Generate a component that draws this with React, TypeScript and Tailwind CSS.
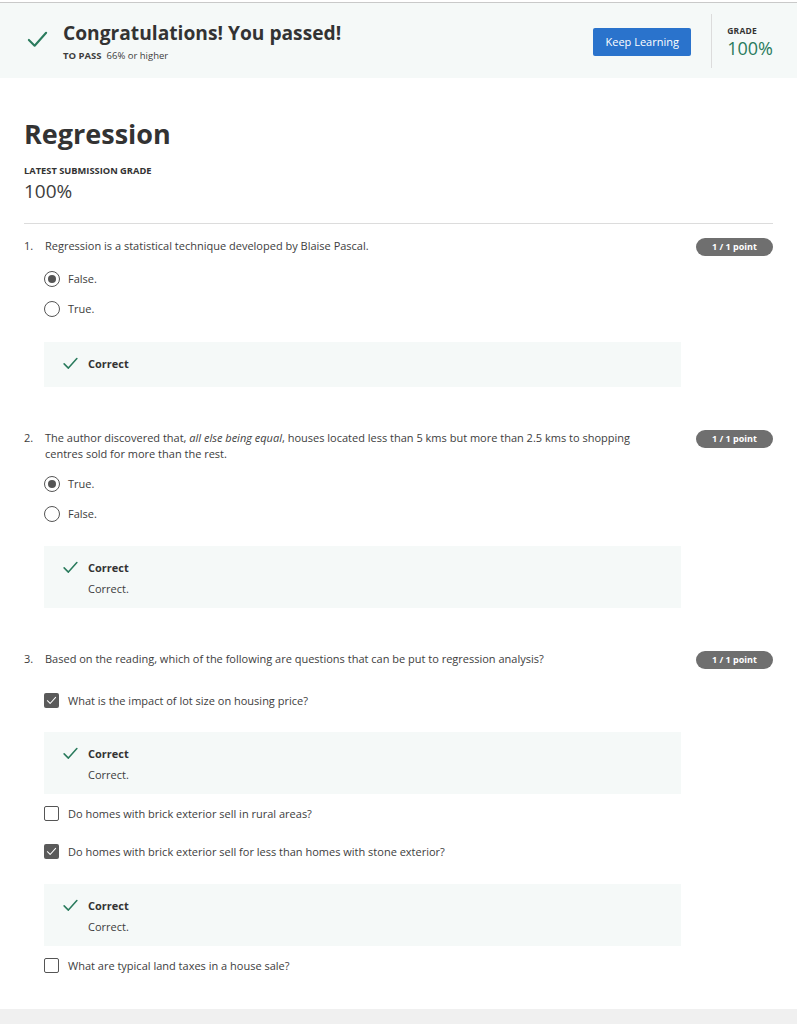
import type { ReactNode } from 'react';

function Check({ className }: { className?: string }) {
  return (
    <svg className={className} viewBox="0 0 24 24" fill="none" stroke="currentColor" strokeWidth={2.2} strokeLinecap="round" strokeLinejoin="round">
      <path d="M3 12.5l6 6L21 5" />
    </svg>
  );
}

function Badge() {
  return (
    <span className="shrink-0 w-[77px] h-[18px] rounded-full bg-[#6f6f6f] text-white text-[9px] font-bold flex items-center justify-center">
      1 / 1 point
    </span>
  );
}

function Radio({ checked, label }: { checked?: boolean; label: string }) {
  return (
    <div className="flex items-center gap-[8px] h-[16px]">
      <span className="w-[16px] h-[16px] rounded-full border-[1.5px] border-[#555] flex items-center justify-center">
        {checked && <span className="w-[8px] h-[8px] rounded-full bg-[#555]" />}
      </span>
      <span>{label}</span>
    </div>
  );
}

function Box({ checked, label }: { checked?: boolean; label: string }) {
  return (
    <div className="flex items-center gap-[9px] h-[16px]">
      {checked ? (
        <span className="w-[15px] h-[15px] rounded-[2px] bg-[#5a5a5a] flex items-center justify-center text-white">
          <Check className="w-[11px] h-[11px]" />
        </span>
      ) : (
        <span className="w-[15px] h-[15px] rounded-[2px] border-[1.5px] border-[#555]" />
      )}
      <span>{label}</span>
    </div>
  );
}

function Correct({ note }: { note?: boolean }) {
  return (
    <div className={`ml-[20px] w-[637px] bg-[#f5f9f8] flex pl-[18px] ${note ? 'h-[62px] pt-[14px]' : 'h-[45px] items-center'}`}>
      <Check className="w-[17px] h-[17px] text-[#2a7b5d] mt-[-1px]" />
      <div className="ml-[9px]">
        <div className="font-bold text-[#333]">Correct</div>
        {note && <div className="mt-[5px]">Correct.</div>}
      </div>
    </div>
  );
}

function Question({ n, children }: { n: number; children: ReactNode }) {
  return (
    <div className="flex items-start justify-between">
      <div className="flex">
        <span className="w-[21px]">{n}.</span>
        <p className="w-[610px] leading-[16px]">{children}</p>
      </div>
      <Badge />
    </div>
  );
}

export default function App() {
  return (
    <div className="min-h-[1024px] bg-white font-['Open_Sans',sans-serif] text-[#3d3d3d] flex flex-col">
      <div className="mt-[2px] border-t border-[#c9c9c9] bg-[#f5f9f8] h-[76px] flex items-center pl-[26px] pr-[24px]">
        <Check className="w-[23px] h-[23px] text-[#2a7b5d] self-start mt-[25px]" />
        <div className="ml-[14px] flex-1 self-start mt-[16px]">
          <h1 className="text-[19.2px] font-bold text-[#333] leading-[28px]">Congratulations! You passed!</h1>
          <div className="text-[9.5px] mt-[2px]">
            <span className="font-bold uppercase mr-[5px]">To pass</span>66% or higher
          </div>
        </div>
        <button className="w-[98px] h-[28px] mt-[3px] rounded-[2px] bg-[#2a73cc] text-white text-[11px]">Keep Learning</button>
        <div className="ml-[20px] h-[54px] border-l border-[#dcdcdc] pl-[15px] pt-[11px]">
          <div className="text-[8.5px] font-bold tracking-wide text-[#333]">GRADE</div>
          <div className="text-[18px] text-[#2a7b5d] leading-[20px] mt-[1px]">100%</div>
        </div>
      </div>

      <div className="flex-1 px-[24px] pt-[38px] text-[11px]">
        <h2 className="text-[27px] font-bold text-[#333] leading-[36px]">Regression</h2>
        <div className="mt-[12px] text-[9.3px] font-bold text-[#333] uppercase">Latest submission grade</div>
        <div className="text-[19px] mt-[1px] leading-[24px]">100%</div>
        <div className="mt-[20px] border-t border-[#dcdcdc]" />

        <div className="pt-[14px]">
          <Question n={1}>Regression is a statistical technique developed by Blaise Pascal.</Question>
          <div className="ml-[20px] mt-[15px] flex flex-col gap-[14px]">
            <Radio checked label="False." />
            <Radio label="True." />
          </div>
          <div className="mt-[25px]"><Correct /></div>
        </div>

        <div className="pt-[43px]">
          <Question n={2}>
            The author discovered that, <em>all else being equal</em>, houses located less than 5 kms but more than 2.5 kms to shopping centres sold for more than the rest.
          </Question>
          <div className="ml-[20px] mt-[14px] flex flex-col gap-[14px]">
            <Radio checked label="True." />
            <Radio label="False." />
          </div>
          <div className="mt-[24px]"><Correct note /></div>
        </div>

        <div className="pt-[43px]">
          <Question n={3}>Based on the reading, which of the following are questions that can be put to regression analysis?</Question>
          <div className="ml-[20px] mt-[24px]"><Box checked label="What is the impact of lot size on housing price?" /></div>
          <div className="mt-[23px]"><Correct note /></div>
          <div className="ml-[20px] mt-[12px]"><Box label="Do homes with brick exterior sell in rural areas?" /></div>
          <div className="ml-[20px] mt-[22px]"><Box checked label="Do homes with brick exterior sell for less than homes with stone exterior?" /></div>
          <div className="mt-[24px]"><Correct note /></div>
          <div className="ml-[20px] mt-[12px]"><Box label="What are typical land taxes in a house sale?" /></div>
        </div>
      </div>

      <div className="h-[15px] bg-[#f0f0f0]" />
    </div>
  );
}
